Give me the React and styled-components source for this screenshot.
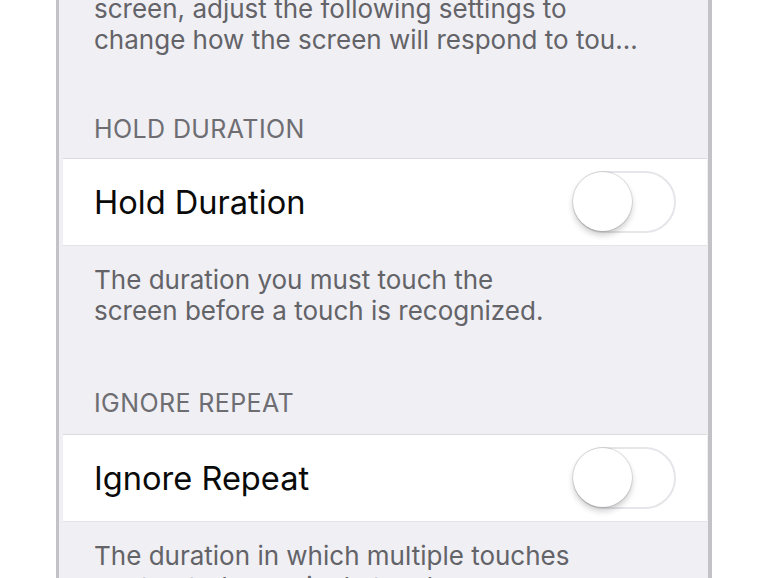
import React from "react";
import styled, { createGlobalStyle } from "styled-components";

const Global = createGlobalStyle`
  html, body { margin: 0; padding: 0; background: #ffffff; overflow: hidden; }
  body { font-family: Inter, "Noto Sans", "Liberation Sans", sans-serif; -webkit-font-smoothing: antialiased; }
`;

const Frame = styled.div`
  margin-left: 56px;
  width: 649px;
  height: 100vh;
  border-left: 3px solid #c3c3c7;
  border-right: 4px solid #c3c3c7;
  background: #efeff4;
  overflow: hidden;
`;

const Scroll = styled.div`
  margin-top: -38px;
  padding: 0 1px 0 4px;
  display: flex;
  flex-direction: column;
`;

const Footer = styled.p`
  margin: 0;
  padding: ${(p) => (p.$first ? "0" : "18px")} 28px 0 31px;
  font-size: 26px;
  line-height: 31px;
  color: #636368;
  letter-spacing: 0px;
`;

const Header = styled.div`
  margin-top: ${(p) => (p.$gap ? `${p.$gap}px` : "62px")};
  padding: 0 28px ${(p) => (p.$pb ? `${p.$pb}px` : "15px")} 31px;
  font-size: 25px;
  line-height: 31px;
  color: #6d6d72;
  text-transform: uppercase;
  letter-spacing: 0.4px;
`;

const Row = styled.div`
  display: flex;
  align-items: center;
  justify-content: space-between;
  height: 86px;
  padding: 0 31px 0 31px;
  background: #ffffff;
  border-top: 1px solid #dcdce0;
  border-bottom: 1px solid #e4e4e8;
`;

const Label = styled.span`
  font-size: 32.6px;
  color: #0a0a0a;
  letter-spacing: 0px;
`;

const Track = styled.div`
  position: relative;
  width: 99px;
  height: 58px;
  border-radius: 31px;
  border: 2px solid #e6e6ea;
  background: #ffffff;
  flex-shrink: 0;
`;

const Knob = styled.div`
  position: absolute;
  left: -2px;
  top: -1px;
  width: 59px;
  height: 59px;
  border-radius: 50%;
  background: #ffffff;
  box-shadow: 0 0 0 1px rgba(0, 0, 0, 0.1), 0 4px 6px rgba(0, 0, 0, 0.2);
`;

const Switch = () => (
  <Track>
    <Knob />
  </Track>
);

export default function App() {
  return (
    <>
      <Global />
      <Frame>
        <Scroll>
          <Footer $first>
            When using Touch Accommodations with the
            <br />
            screen, adjust the following settings to
            <br />
            change how the screen will respond to tou...
          </Footer>
          <Header $gap={59} $pb={13}>Hold Duration</Header>
          <Row>
            <Label>Hold Duration</Label>
            <Switch />
          </Row>
          <Footer>
            The duration you must touch the
            <br />
            screen before a touch is recognized.
          </Footer>
          <Header>Ignore Repeat</Header>
          <Row>
            <Label>Ignore Repeat</Label>
            <Switch />
          </Row>
          <Footer>
            The duration in which multiple touches
            <br />
            are treated as a single touch.
          </Footer>
        </Scroll>
      </Frame>
    </>
  );
}
